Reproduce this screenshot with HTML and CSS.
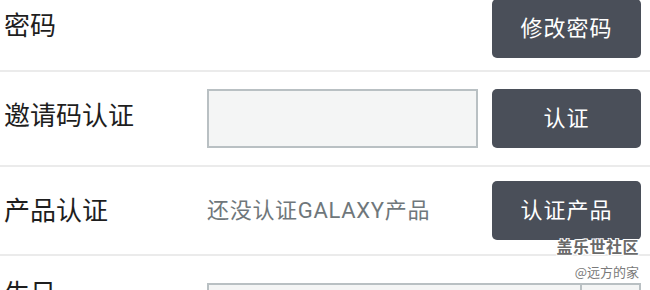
FILE: index.html
```html
<!DOCTYPE html>
<html lang="zh-CN">
<head>
<meta charset="utf-8">
<title>账户设置</title>
<link rel="stylesheet" href="styles.css">
</head>
<body>
<div class="page">
  <div class="row row-first">
    <div class="label">密码</div>
    <div class="field"></div>
    <button class="btn">修改密码</button>
  </div>
  <div class="row row-second">
    <div class="label">邀请码认证</div>
    <div class="field"><div class="input"></div></div>
    <button class="btn">认证</button>
  </div>
  <div class="row row-third">
    <div class="label">产品认证</div>
    <div class="field"><span class="hint">还没认证GALAXY产品</span></div>
    <button class="btn">认证产品</button>
  </div>
  <div class="row row-fourth">
    <div class="label">生日</div>
    <div class="field date">
      <div class="input date-input"></div>
      <div class="input date-pick"></div>
    </div>
  </div>
  <div class="watermark">
    <div class="wm-title">盖乐世社区</div>
    <div class="wm-user">@远方的家</div>
  </div>
</div>
</body>
</html>
```

FILE: styles.css
```css
html, body {
  margin: 0;
  padding: 0;
  background: #ffffff;
}
body {
  width: 650px;
  height: 290px;
  overflow: hidden;
  font-family: "Noto Sans CJK SC", Roboto, sans-serif;
}
.page {
  position: relative;
  height: 290px;
  overflow: hidden;
}
.row {
  display: flex;
  align-items: center;
  padding-left: 4px;
  padding-right: 9px;
  border-bottom: 2px solid #ebebeb;
}
.row-first {
  height: 59px;
  margin-top: -1px;
  padding-bottom: 12px;
}
.row-second {
  height: 59px;
  padding-top: 17px;
  padding-bottom: 17px;
}
.row-third {
  height: 59px;
  padding-top: 14px;
  padding-bottom: 14px;
}
.row-fourth {
  align-items: flex-start;
  padding-top: 27px;
  border-bottom: none;
  height: 60px;
}
.label {
  width: 203px;
  flex: none;
  font-size: 26px;
  color: #1e1e1e;
  line-height: 1;
}
.row-first .label { margin-top: -9px; }
.row-second .label { margin-top: -9px; }
.row-third .label { margin-top: -4px; }
.row-fourth .label { margin-top: -4px; }
.field {
  flex: 1;
  display: flex;
  align-items: center;
  height: 59px;
  padding-right: 14px;
}
.input {
  box-sizing: border-box;
  width: 271px;
  height: 59px;
  background: #f4f5f5;
  border: 2px solid #b9c0c3;
}
.hint {
  font-family: Roboto, "Noto Sans CJK SC", sans-serif;
  font-size: 22px;
  color: #6f777b;
  letter-spacing: 0.7px;
  line-height: 1;
}
.date {
  padding-right: 0;
}
.date-input {
  width: 375px;
  height: 59px;
}
.date-pick {
  width: 59px;
  height: 59px;
  border-left: none;
}
.btn {
  flex: none;
  display: flex;
  align-items: center;
  justify-content: center;
  width: 149px;
  height: 59px;
  border: none;
  border-radius: 5px;
  background: #4a4f59;
  color: #ffffff;
  font-family: "Noto Sans CJK SC", sans-serif;
  font-size: 22px;
  line-height: 1;
  letter-spacing: 1px;
  padding: 0 0 5px 0;
}
.watermark {
  position: absolute;
  right: 11px;
  top: 235px;
  text-align: right;
}
.wm-title {
  font-size: 16px;
  font-weight: 700;
  color: #6a6a6a;
  line-height: 22px;
  letter-spacing: 0.5px;
  text-shadow: 1px 1px 0 #fff, -1px -1px 0 #fff, 1px -1px 0 #fff, -1px 1px 0 #fff;
}
.wm-user {
  font-size: 13px;
  color: #7a7a7a;
  line-height: 18px;
  margin-top: 6px;
}
```
